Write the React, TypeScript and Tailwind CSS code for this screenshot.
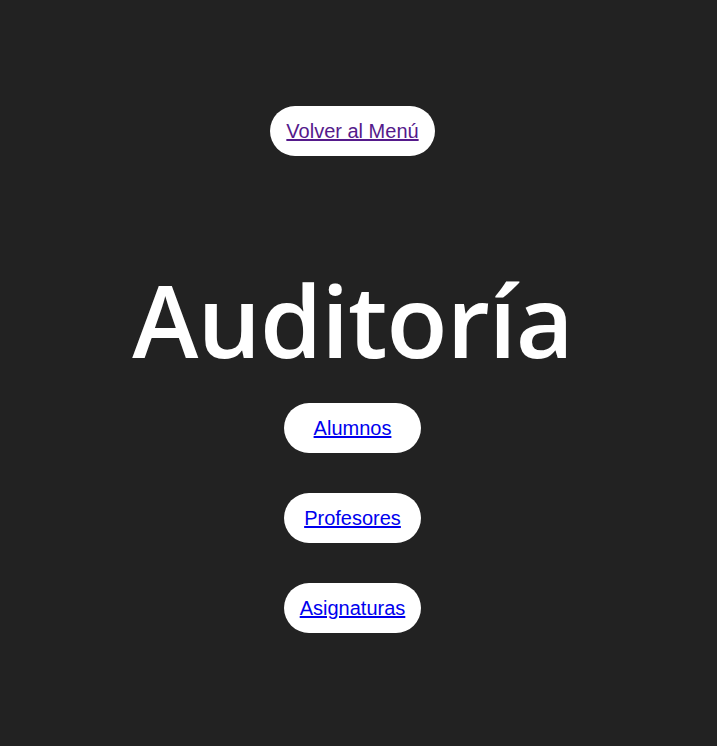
import React from "react";

const links = ["Alumnos", "Profesores", "Asignaturas"];

export default function App() {
  return (
    <div className="flex min-h-screen flex-col items-center bg-[#222222] pr-3 font-['Liberation_Sans',Arial,sans-serif]">
      <a
        href="#menu"
        className="mt-[106px] flex h-[50px] items-center rounded-[25px] bg-white px-4 text-[20px] text-[#551a8b] underline"
      >
        Volver al Menú
      </a>
      <h1 className="mt-[113px] text-[100px] leading-[100px] font-semibold tracking-[-1px] text-white font-['Open_Sans',sans-serif]">
        Auditoría
      </h1>
      <div className="mt-[34px] flex flex-col items-center gap-10">
        {links.map((name) => (
          <a
            key={name}
            href={"#" + name.toLowerCase()}
            className="flex h-[50px] w-[137px] items-center justify-center rounded-[25px] bg-white text-[20px] text-[#0000ee] underline"
          >
            {name}
          </a>
        ))}
      </div>
    </div>
  );
}
